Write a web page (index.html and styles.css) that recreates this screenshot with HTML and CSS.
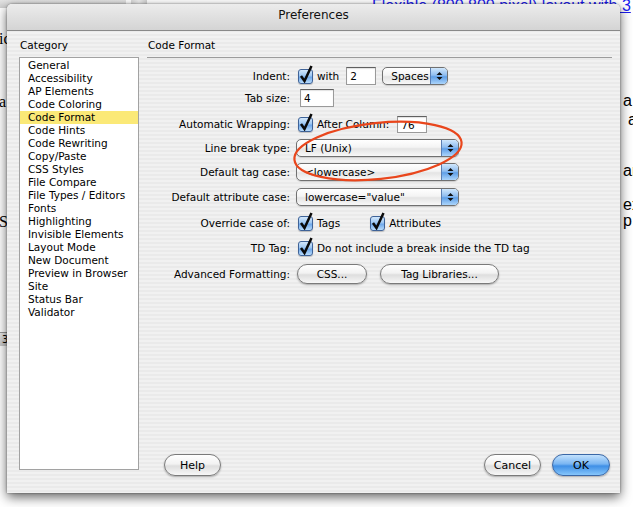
FILE: index.html
```html
<!DOCTYPE html>
<html lang="en">

<head>
  <meta charset="UTF-8" />
  <title>Preferences</title>
  <meta name="viewport" content="width=device-width, initial-scale=1.0">
  <link rel="stylesheet" href="styles.css">
</head>

<body>

  <div class="desktop">

    <!-- Page behind the dialog -->
    <div class="back-title"></div>
    <div class="back-scroll"></div>
    <a class="back-link">Flexible (800,800 pixel) layout with 3</a>
    <span class="back-l back-l1">ic</span>
    <span class="back-l back-l2">a</span>
    <span class="back-l back-l3">Se</span>
    <div class="back-status">3</div>
    <span class="back-r back-r1">a</span>
    <span class="back-r back-r2">a</span>
    <span class="back-r back-r3">ar</span>
    <span class="back-r back-r4">ex</span>
    <span class="back-r back-r5">p</span>

    <!-- Preferences Dialog -->
    <div class="dialog">
      <div class="titlebar">Preferences</div>

      <div class="dialog-body">
        <div class="category-col">
          <div class="col-title">Category</div>
          <ul class="category-list">
            <li>General</li>
            <li>Accessibility</li>
            <li>AP Elements</li>
            <li>Code Coloring</li>
            <li class="selected">Code Format</li>
            <li>Code Hints</li>
            <li>Code Rewriting</li>
            <li>Copy/Paste</li>
            <li>CSS Styles</li>
            <li>File Compare</li>
            <li>File Types / Editors</li>
            <li>Fonts</li>
            <li>Highlighting</li>
            <li>Invisible Elements</li>
            <li>Layout Mode</li>
            <li>New Document</li>
            <li>Preview in Browser</li>
            <li>Site</li>
            <li>Status Bar</li>
            <li>Validator</li>
          </ul>
        </div>

        <div class="panel">
          <div class="panel-title">Code Format</div>

          <div class="form">
            <label>Indent:</label>
            <div class="ctrl">
              <span class="check"><svg viewBox="0 0 16 18"><path d="M3 11 L6.5 16 L13.5 1" /></svg></span>
              <span class="after-check">with</span>
              <span class="field field-s field-gap">2</span>
              <span class="popup popup-s">
                <span class="value">Spaces</span>
                <span class="arrows"><svg viewBox="0 0 7 10"><path d="M3.5 1 L6.5 4 L0.5 4 Z M0.5 6 L6.5 6 L3.5 9 Z" /></svg></span>
              </span>
            </div>

            <label>Tab size:</label>
            <div class="ctrl">
              <span class="field field-m">4</span>
            </div>

            <label>Automatic Wrapping:</label>
            <div class="ctrl">
              <span class="check"><svg viewBox="0 0 16 18"><path d="M3 11 L6.5 16 L13.5 1" /></svg></span>
              <span class="after-check">After Column:</span>
              <span class="field field-s field-gap2">76</span>
            </div>

            <label>Line break type:</label>
            <div class="ctrl">
              <span class="popup popup-l">
                <span class="value">LF (Unix)</span>
                <span class="arrows"><svg viewBox="0 0 7 10"><path d="M3.5 1 L6.5 4 L0.5 4 Z M0.5 6 L6.5 6 L3.5 9 Z" /></svg></span>
              </span>
            </div>

            <label>Default tag case:</label>
            <div class="ctrl">
              <span class="popup popup-l">
                <span class="value">&lt;lowercase&gt;</span>
                <span class="arrows"><svg viewBox="0 0 7 10"><path d="M3.5 1 L6.5 4 L0.5 4 Z M0.5 6 L6.5 6 L3.5 9 Z" /></svg></span>
              </span>
            </div>

            <label>Default attribute case:</label>
            <div class="ctrl">
              <span class="popup popup-l">
                <span class="value">lowercase="value"</span>
                <span class="arrows"><svg viewBox="0 0 7 10"><path d="M3.5 1 L6.5 4 L0.5 4 Z M0.5 6 L6.5 6 L3.5 9 Z" /></svg></span>
              </span>
            </div>

            <label>Override case of:</label>
            <div class="ctrl">
              <span class="check"><svg viewBox="0 0 16 18"><path d="M3 11 L6.5 16 L13.5 1" /></svg></span>
              <span class="after-check">Tags</span>
              <span class="check check-gap"><svg viewBox="0 0 16 18"><path d="M3 11 L6.5 16 L13.5 1" /></svg></span>
              <span class="after-check">Attributes</span>
            </div>

            <label>TD Tag:</label>
            <div class="ctrl">
              <span class="check"><svg viewBox="0 0 16 18"><path d="M3 11 L6.5 16 L13.5 1" /></svg></span>
              <span class="after-check">Do not include a break inside the TD tag</span>
            </div>

            <label>Advanced Formatting:</label>
            <div class="ctrl">
              <button class="btn btn-css">CSS...</button>
              <button class="btn btn-tags">Tag Libraries...</button>
            </div>
          </div>

          <div class="dialog-buttons">
            <button class="btn btn-help">Help</button>
            <button class="btn btn-cancel">Cancel</button>
            <button class="btn btn-ok">OK</button>
          </div>
        </div>
      </div>

      <!-- red ring drawn over the screenshot -->
      <svg class="annotation" viewBox="0 0 613 489">
        <ellipse cx="371" cy="147" rx="84" ry="28" transform="rotate(-6 371 147)" />
      </svg>
    </div>
  </div>

</body>

</html>
```

FILE: styles.css
```css
* {
  margin: 0;
  padding: 0;
  box-sizing: border-box;
}

body {
  width: 633px;
  height: 507px;
  overflow: hidden;
  background: #fff;
  font-family: "DejaVu Sans", sans-serif;
  font-size: 10.5px;
  color: #000;
}

.desktop {
  position: relative;
  width: 633px;
  height: 507px;
  overflow: hidden;
  background: #fff;
}

/* === Page behind === */
.back-title {
  position: absolute;
  left: 0;
  top: 0;
  width: 126px;
  height: 8px;
  background: linear-gradient(#e4e4e4, #cfcfcf);
}

.back-scroll {
  position: absolute;
  left: 131px;
  top: 0;
  width: 16px;
  height: 8px;
  background: linear-gradient(90deg, #d8d8d8, #f0f0f0, #d0d0d0);
}

.back-link {
  position: absolute;
  left: 372px;
  top: -3px;
  font-family: "Liberation Sans", sans-serif;
  font-size: 16px;
  line-height: 18px;
  color: #1a1aee;
  text-decoration: underline;
  white-space: nowrap;
}

.back-l {
  position: absolute;
  left: -1px;
  font-family: "Liberation Serif", serif;
  font-size: 16px;
  line-height: 16px;
}

.back-l1 { top: 31px; }
.back-l2 { top: 94px; }
.back-l3 { top: 214px; }

.back-status {
  position: absolute;
  left: 0;
  top: 332px;
  width: 8px;
  height: 14px;
  background: linear-gradient(#e8e8e8, #c8c8c8);
  border-top: 1px solid #999;
  font-size: 10px;
  line-height: 13px;
  padding-left: 2px;
}

.back-r {
  position: absolute;
  left: 623px;
  font-family: "Liberation Sans", sans-serif;
  font-size: 16px;
  line-height: 16px;
}

.back-r1 { top: 93px; }
.back-r2 { top: 112px; left: 628px; }
.back-r3 { top: 163px; }
.back-r4 { top: 197px; }
.back-r5 { top: 213px; }

/* === Dialog window === */
.dialog {
  position: absolute;
  left: 7px;
  top: 4px;
  width: 613px;
  height: 489px;
  display: flex;
  flex-direction: column;
  border-radius: 5px 5px 0 0;
  background: repeating-linear-gradient(#f1f1f1 0, #f1f1f1 2px, #eaeaea 2px, #eaeaea 4px);
  box-shadow: 0 4px 12px rgba(0, 0, 0, 0.62), 0 0 2px rgba(0, 0, 0, 0.5);
}

.titlebar {
  height: 27px;
  border-bottom: 1px solid #888;
  border-radius: 5px 5px 0 0;
  background: linear-gradient(#ececec, #d4d4d4);
  text-align: center;
  font-size: 12px;
  line-height: 22px;
  color: #111;
}

.dialog-body {
  flex: 1;
  display: flex;
  gap: 8px;
  padding: 8px 8px 17px 12px;
}

.category-col {
  width: 120px;
  display: flex;
  flex-direction: column;
  padding-bottom: 6px;
}

.col-title {
  height: 18px;
  line-height: 13px;
  padding-left: 1px;
}

.category-list {
  flex: 1;
  list-style: none;
  background: #fff;
  border: 1px solid #a2a2a2;
  padding-top: 1px;
}

.category-list li {
  line-height: 13px;
  padding-left: 8px;
  white-space: nowrap;
}

.category-list .selected {
  background: #fbe977;
}

.panel {
  flex: 1;
  display: flex;
  flex-direction: column;
}

.panel-title {
  height: 19px;
  line-height: 13px;
  padding-left: 1px;
  border-bottom: 1px solid #9c9c9c;
}

/* === Form rows === */
.form {
  margin-top: 7px;
  display: grid;
  grid-template-columns: 143px auto;
  grid-template-rows: 22px 26px 24px 24px 25px 26px 25px 26px 22px;
  column-gap: 6px;
}

.form label {
  height: 22px;
  line-height: 22px;
  text-align: right;
  white-space: nowrap;
}

.ctrl {
  height: 22px;
  display: flex;
  align-items: center;
  white-space: nowrap;
}

.check {
  position: relative;
  flex: none;
  width: 15px;
  height: 15px;
  margin-left: 2px;
  border: 1px solid #3f6398;
  border-radius: 3px;
  background: linear-gradient(#d3e8fc 0%, #9cc6f2 45%, #6fa8ea 55%, #b9dcfb 100%);
  box-shadow: 0 1px 1px rgba(0, 0, 0, 0.2);
}

.check svg {
  position: absolute;
  left: -1px;
  top: -5px;
  width: 16px;
  height: 18px;
}

.check path {
  fill: none;
  stroke: #0a0a0a;
  stroke-width: 2.5;
}

.check-gap {
  margin-left: 30px;
}

.after-check {
  margin-left: 4px;
}

.field {
  height: 18px;
  background: #fff;
  border: 1px solid #9a9a9a;
  border-top-color: #606060;
  box-shadow: inset 0 1px 1px rgba(0, 0, 0, 0.12);
  padding-left: 3px;
  line-height: 16px;
}

.field-s {
  width: 30px;
}

.field-m {
  width: 34px;
  margin-left: 4px;
}

.field-gap {
  margin-left: 7px;
}

.field-gap2 {
  margin-left: 8px;
  height: 17px;
}

.popup {
  display: flex;
  height: 18px;
  border: 1px solid #707070;
  border-radius: 5px;
  overflow: hidden;
  background: linear-gradient(#ffffff 0%, #f4f4f4 45%, #e4e4e4 55%, #f8f8f8 100%);
  box-shadow: 0 1px 1px rgba(0, 0, 0, 0.15);
}

.popup-s {
  width: 66px;
  margin-left: 6px;
}

.popup-l {
  width: 163px;
}

.popup .value {
  flex: 1;
  padding-left: 8px;
  line-height: 16px;
}

.popup .arrows {
  width: 17px;
  display: flex;
  align-items: center;
  justify-content: center;
  border-left: 1px solid #5a7eb2;
  background: linear-gradient(#d0e7fc 0%, #8fbdf0 45%, #5f9fe7 55%, #acd5fb 100%);
}

.arrows svg {
  width: 7px;
  height: 10px;
  fill: #111;
}

/* === Push buttons === */
.btn {
  height: 21px;
  border: 1px solid #7a7a7a;
  border-radius: 11px;
  background: linear-gradient(#ffffff 0%, #f2f2f2 45%, #dedede 55%, #f7f7f7 100%);
  box-shadow: 0 1px 2px rgba(0, 0, 0, 0.3);
  font-family: inherit;
  font-size: 10.5px;
  color: #000;
}

.btn-css {
  width: 70px;
  height: 20px;
  margin-left: 1px;
}

.btn-tags {
  width: 119px;
  height: 20px;
  margin-left: 13px;
}

.dialog-buttons {
  margin-top: auto;
  display: flex;
  align-items: center;
  padding: 0 2px 0 17px;
}

.btn-help,
.btn-cancel {
  width: 57px;
  height: 22px;
  font-size: 11px;
}

.btn-cancel {
  margin-left: auto;
}

.btn-ok {
  width: 58px;
  height: 22px;
  margin-left: 11px;
  font-size: 11px;
  border-color: #3a67a6;
  background: linear-gradient(#c2e1fd 0%, #79b5f2 45%, #3f8fe6 55%, #86c6fb 100%);
}

.annotation {
  position: absolute;
  left: 0;
  top: 0;
  width: 613px;
  height: 489px;
  pointer-events: none;
}

.annotation ellipse {
  fill: none;
  stroke: #e9461c;
  stroke-width: 2.2;
}
```
